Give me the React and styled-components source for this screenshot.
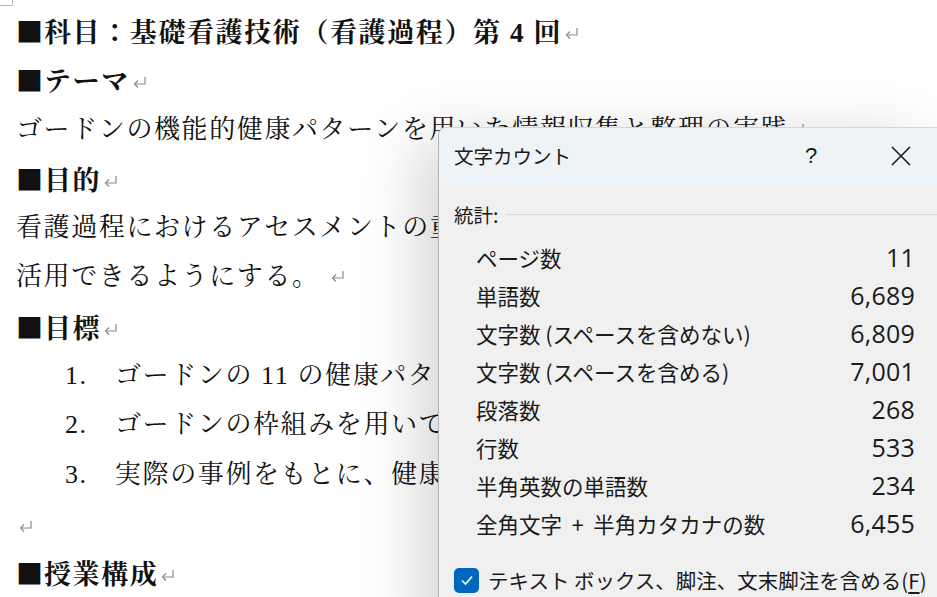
import React from "react";
import styled, { createGlobalStyle } from "styled-components";

const GlobalStyle = createGlobalStyle`
  html, body {
    margin: 0;
    padding: 0;
    background: #ffffff;
    overflow: hidden;
  }
`;

const Screen = styled("div")`
  position: relative;
  width: 937px;
  height: 597px;
  overflow: hidden;
  background: #ffffff;
`;

const CornerMark = styled("div")`
  position: absolute;
  left: 0;
  top: 0;
  width: 12px;
  height: 5px;
  border-right: 1px solid #b8b8b8;
  border-bottom: 1px solid #b8b8b8;
`;

//本文
const Doc = styled("div")`
  padding: 6px 0 0 16px;
  font-family: "Liberation Serif", "Noto Serif CJK JP", "Noto Sans CJK JP", serif;
  font-size: 26px;
  letter-spacing: 1.6px;
  color: #111;
`;

const Line = styled("div")`
  height: 49.3px;
  line-height: 49.3px;
  white-space: nowrap;
`;

const Heading = styled(Line)`
  font-size: 27px;
  font-weight: 700;
  letter-spacing: 1.6px;
`;

const Square = styled("span")`
  font-family: "Noto Sans CJK JP", sans-serif;
  font-weight: 400;
  letter-spacing: 0;
  margin-right: 1px;
`;

const ListLine = styled(Line)`
  display: flex;
  padding-left: 49px;
`;

const Num = styled("span")`
  width: 50px;
  flex: none;
`;

const Mark = styled("svg")`
  width: 15px;
  height: 15px;
  margin-left: 2px;
  vertical-align: ${(p) => (p.$low ? "-2px" : "1px")};
`;

const ReturnMark = ({ low }) => (
  <Mark $low={low} viewBox="0 0 15 15">
    <path d="M13 2v7H3" fill="none" stroke="#8a8a8a" strokeWidth="1.2" />
    <path d="M6 5.5L2.5 9 6 12.5" fill="none" stroke="#8a8a8a" strokeWidth="1.2" />
  </Mark>
);

//ダイアログ
const Dialog = styled("div")`
  position: absolute;
  left: 438px;
  top: 127px;
  width: 499px;
  height: 520px;
  background: #f0f0f0;
  border-top-left-radius: 8px;
  border-left: 1px solid #b4b4b4;
  border-top: 1px solid #d6d6d6;
  box-shadow: -20px 10px 60px rgba(0, 0, 0, 0.16);
  font-family: "Noto Sans CJK JP", "Noto Sans", sans-serif;
  color: #1a1a1a;
`;

const TitleBar = styled("div")`
  height: 55px;
  display: flex;
  align-items: center;
  background: #eef3f8;
  border-top-left-radius: 8px;
  padding-left: 15px;
  font-size: 19.5px;
`;

const Title = styled("span")`
  flex: 1;
`;

const TitleBtn = styled("span")`
  width: 40px;
  display: flex;
  justify-content: center;
  margin-right: ${(p) => p.$mr || 0}px;
  font-family: "Liberation Sans", sans-serif;
  font-size: 22px;
`;

const Body = styled("div")`
  padding: 16px 23px 0 15px;
`;

const GroupHead = styled("div")`
  display: flex;
  align-items: center;
  gap: 8px;
  height: 30px;
  font-size: 19.5px;
  &::after {
    content: "";
    flex: 1;
    height: 1px;
    background: #d8d8d8;
    margin-right: -23px;
  }
`;

const Stats = styled("div")`
  margin-top: 9px;
  padding-left: 22px;
`;

const Row = styled("div")`
  display: flex;
  justify-content: space-between;
  align-items: center;
  height: 38px;
  font-size: 21.5px;
  white-space: pre;
`;

const Value = styled("span")`
  font-family: "Open Sans", "Noto Sans", sans-serif;
  font-size: 25px;
  letter-spacing: 0.2px;
`;

const CheckRow = styled("label")`
  display: flex;
  align-items: center;
  gap: 9px;
  margin-top: 23px;
  font-size: 20.5px;
  white-space: nowrap;
`;

const Box = styled("span")`
  width: 25px;
  height: 25px;
  flex: none;
  border-radius: 5px;
  background: #0067c0;
  display: flex;
  align-items: center;
  justify-content: center;
`;

const Under = styled("span")`
  text-decoration: underline;
  text-underline-offset: 3px;
`;

const stats = [
  ["ページ数", "11"],
  ["単語数", "6,689"],
  ["文字数 (スペースを含めない)", "6,809"],
  ["文字数 (スペースを含める)", "7,001"],
  ["段落数", "268"],
  ["行数", "533"],
  ["半角英数の単語数", "234"],
  ["全角文字  +  半角カタカナの数", "6,455"],
];

const App = () => {
  return (
    <Screen>
      <GlobalStyle />
      <CornerMark />
      <Doc>
        <Heading>
          <Square>■</Square>科目：基礎看護技術（看護過程）第 4 回<ReturnMark />
        </Heading>
        <Heading>
          <Square>■</Square>テーマ<ReturnMark />
        </Heading>
        <Line>
          ゴードンの機能的健康パターンを用いた情報収集と整理の実践<ReturnMark />
        </Line>
        <Heading>
          <Square>■</Square>目的<ReturnMark />
        </Heading>
        <Line>看護過程におけるアセスメントの重要性を理解し、情報を整理して</Line>
        <Line>
          活用できるようにする。 <ReturnMark />
        </Line>
        <Heading>
          <Square>■</Square>目標<ReturnMark />
        </Heading>
        <ListLine>
          <Num>1.</Num>ゴードンの 11 の健康パターンを説明できる。
        </ListLine>
        <ListLine>
          <Num>2.</Num>ゴードンの枠組みを用いて情報を分類できる。
        </ListLine>
        <ListLine>
          <Num>3.</Num>実際の事例をもとに、健康パターンを分析できる。
        </ListLine>
        <Line>
          <ReturnMark low />
        </Line>
        <Heading>
          <Square>■</Square>授業構成<ReturnMark />
        </Heading>
      </Doc>

      <Dialog>
        <TitleBar>
          <Title>文字カウント</Title>
          <TitleBtn $mr={50}>?</TitleBtn>
          <TitleBtn $mr={17}>
            <svg width="22" height="22" viewBox="0 0 22 22">
              <path d="M2 2L20 20M20 2L2 20" stroke="#1a1a1a" strokeWidth="1.6" />
            </svg>
          </TitleBtn>
        </TitleBar>
        <Body>
          <GroupHead>統計:</GroupHead>
          <Stats>
            {stats.map(([label, value]) => (
              <Row key={label}>
                <span>{label}</span>
                <Value>{value}</Value>
              </Row>
            ))}
          </Stats>
          <CheckRow>
            <Box>
              <svg width="14" height="14" viewBox="0 0 14 14">
                <path d="M2 7.5L5.5 11 12 3.5" fill="none" stroke="#fff" strokeWidth="1.6" />
              </svg>
            </Box>
            <span>
              テキスト ボックス、脚注、文末脚注を含める(<Under>F</Under>)
            </span>
          </CheckRow>
        </Body>
      </Dialog>
    </Screen>
  );
};

export default App;
